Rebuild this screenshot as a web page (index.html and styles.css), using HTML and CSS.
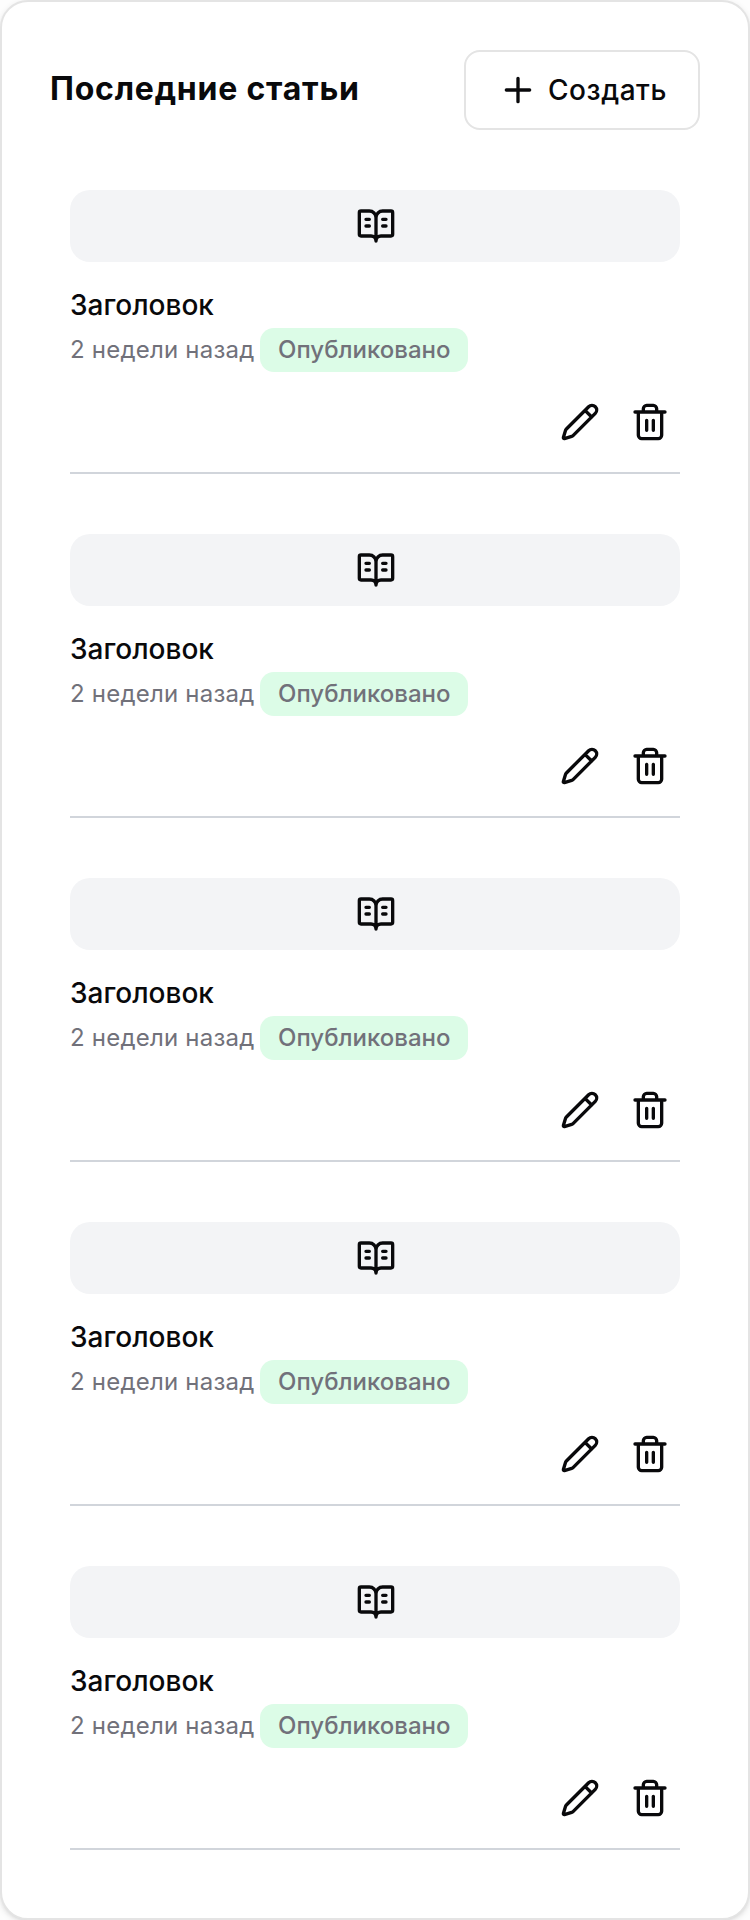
FILE: index.html
```html
<!DOCTYPE html>
<html lang="ru">
<head>
<meta charset="utf-8">
<title>Последние статьи</title>
<link rel="stylesheet" href="styles.css">
</head>
<body>
<svg class="sprite" aria-hidden="true">
  <symbol id="book" viewBox="0 0 24 24"><path d="M12 7v14M16 12h2M16 8h2M3 18a1 1 0 0 1-1-1V4a1 1 0 0 1 1-1h5a4 4 0 0 1 4 4 4 4 0 0 1 4-4h5a1 1 0 0 1 1 1v13a1 1 0 0 1-1 1h-6a3 3 0 0 0-3 3 3 3 0 0 0-3-3zM6 12h2M6 8h2"/></symbol>
  <symbol id="pencil" viewBox="0 0 24 24"><path d="M21.174 6.812a1 1 0 0 0-3.986-3.987L3.842 16.174a2 2 0 0 0-.5.83l-1.321 4.352a.5.5 0 0 0 .623.622l4.353-1.32a2 2 0 0 0 .83-.497zM15 5l4 4"/></symbol>
  <symbol id="trash" viewBox="0 0 24 24"><path d="M3 6h18M19 6v14c0 1-1 2-2 2H7c-1 0-2-1-2-2V6M8 6V4c0-1 1-2 2-2h4c1 0 2 1 2 2v2M10 11v6M14 11v6"/></symbol>
  <symbol id="plus" viewBox="0 0 24 24"><path d="M5 12h14M12 5v14"/></symbol>
</svg>
<main class="card">
  <header class="header">
    <h1 class="title">Последние статьи</h1>
    <button class="create"><svg class="icon"><use href="#plus"/></svg><span class="create-label">Создать</span></button>
  </header>
  <section class="list">
    <article class="item">
      <div class="cover"><svg class="icon"><use href="#book"/></svg></div>
      <h2 class="name">Заголовок</h2>
      <div class="meta"><span class="date">2 недели назад</span><span class="badge">Опубликовано</span></div>
      <div class="actions"><svg class="icon"><use href="#pencil"/></svg><svg class="icon"><use href="#trash"/></svg></div>
    </article>
    <article class="item">
      <div class="cover"><svg class="icon"><use href="#book"/></svg></div>
      <h2 class="name">Заголовок</h2>
      <div class="meta"><span class="date">2 недели назад</span><span class="badge">Опубликовано</span></div>
      <div class="actions"><svg class="icon"><use href="#pencil"/></svg><svg class="icon"><use href="#trash"/></svg></div>
    </article>
    <article class="item">
      <div class="cover"><svg class="icon"><use href="#book"/></svg></div>
      <h2 class="name">Заголовок</h2>
      <div class="meta"><span class="date">2 недели назад</span><span class="badge">Опубликовано</span></div>
      <div class="actions"><svg class="icon"><use href="#pencil"/></svg><svg class="icon"><use href="#trash"/></svg></div>
    </article>
    <article class="item">
      <div class="cover"><svg class="icon"><use href="#book"/></svg></div>
      <h2 class="name">Заголовок</h2>
      <div class="meta"><span class="date">2 недели назад</span><span class="badge">Опубликовано</span></div>
      <div class="actions"><svg class="icon"><use href="#pencil"/></svg><svg class="icon"><use href="#trash"/></svg></div>
    </article>
    <article class="item">
      <div class="cover"><svg class="icon"><use href="#book"/></svg></div>
      <h2 class="name">Заголовок</h2>
      <div class="meta"><span class="date">2 недели назад</span><span class="badge">Опубликовано</span></div>
      <div class="actions"><svg class="icon"><use href="#pencil"/></svg><svg class="icon"><use href="#trash"/></svg></div>
    </article>
  </section>
</main>
</body>
</html>
```
FILE: styles.css
```css
* { box-sizing: border-box; }
html { overflow: hidden; }
body {
  margin: 0;
  background: #fdfdfd;
  color: #09090b;
  font-family: Inter, "Liberation Sans", sans-serif;
}
.sprite { display: none; }
.icon {
  flex: none;
  width: 40px;
  height: 40px;
  fill: none;
  stroke: currentColor;
  stroke-width: 2;
  stroke-linecap: round;
  stroke-linejoin: round;
}
.card {
  height: 1920px;
  padding: 48px;
  border: 2px solid #e4e4e4;
  border-radius: 28px;
  background: #fff;
  box-shadow: 0 2px 6px rgba(0, 0, 0, .1), 0 2px 4px -2px rgba(0, 0, 0, .1);
}
.header {
  display: flex;
  align-items: center;
  justify-content: space-between;
  height: 80px;
}
.title {
  margin: 0;
  padding-bottom: 2px;
  font-size: 32px;
  line-height: 40px;
  font-weight: 700;
  letter-spacing: .78px;
  white-space: nowrap;
}
.create {
  display: flex;
  align-items: center;
  gap: 10px;
  width: 236px;
  height: 80px;
  padding: 0 0 0 32px;
  border: 2px solid #e4e4e4;
  border-radius: 16px;
  background: #fff;
  color: inherit;
  font: 500 28px/40px Inter, "Liberation Sans", sans-serif;
  letter-spacing: .55px;
}
.list { padding: 40px 20px 0; }
.item {
  height: 344px;
  padding-top: 20px;
}
.item::after {
  content: "";
  display: block;
  height: 2px;
  margin-top: 30px;
  background: #d1d5db;
}
.cover {
  display: flex;
  align-items: center;
  justify-content: center;
  height: 72px;
  padding-left: 1px;
  border-radius: 20px;
  background: #f3f4f6;
}
.name {
  margin: 21px 0 0;
  font-size: 28px;
  line-height: 44px;
  font-weight: 500;
}
.meta {
  display: flex;
  align-items: center;
  gap: 6px;
  height: 44px;
  margin-top: 1px;
  color: #71717a;
  font-size: 24px;
  line-height: 44px;
  white-space: nowrap;
}
.date {
  width: 184px;
  letter-spacing: .22px;
}
.badge {
  width: 208px;
  height: 44px;
  padding-left: 18px;
  border-radius: 14px;
  background: #dcfce7;
  font-weight: 500;
}
.actions {
  display: flex;
  justify-content: flex-end;
  gap: 30px;
  margin-top: 30px;
  padding-right: 10px;
}
```
